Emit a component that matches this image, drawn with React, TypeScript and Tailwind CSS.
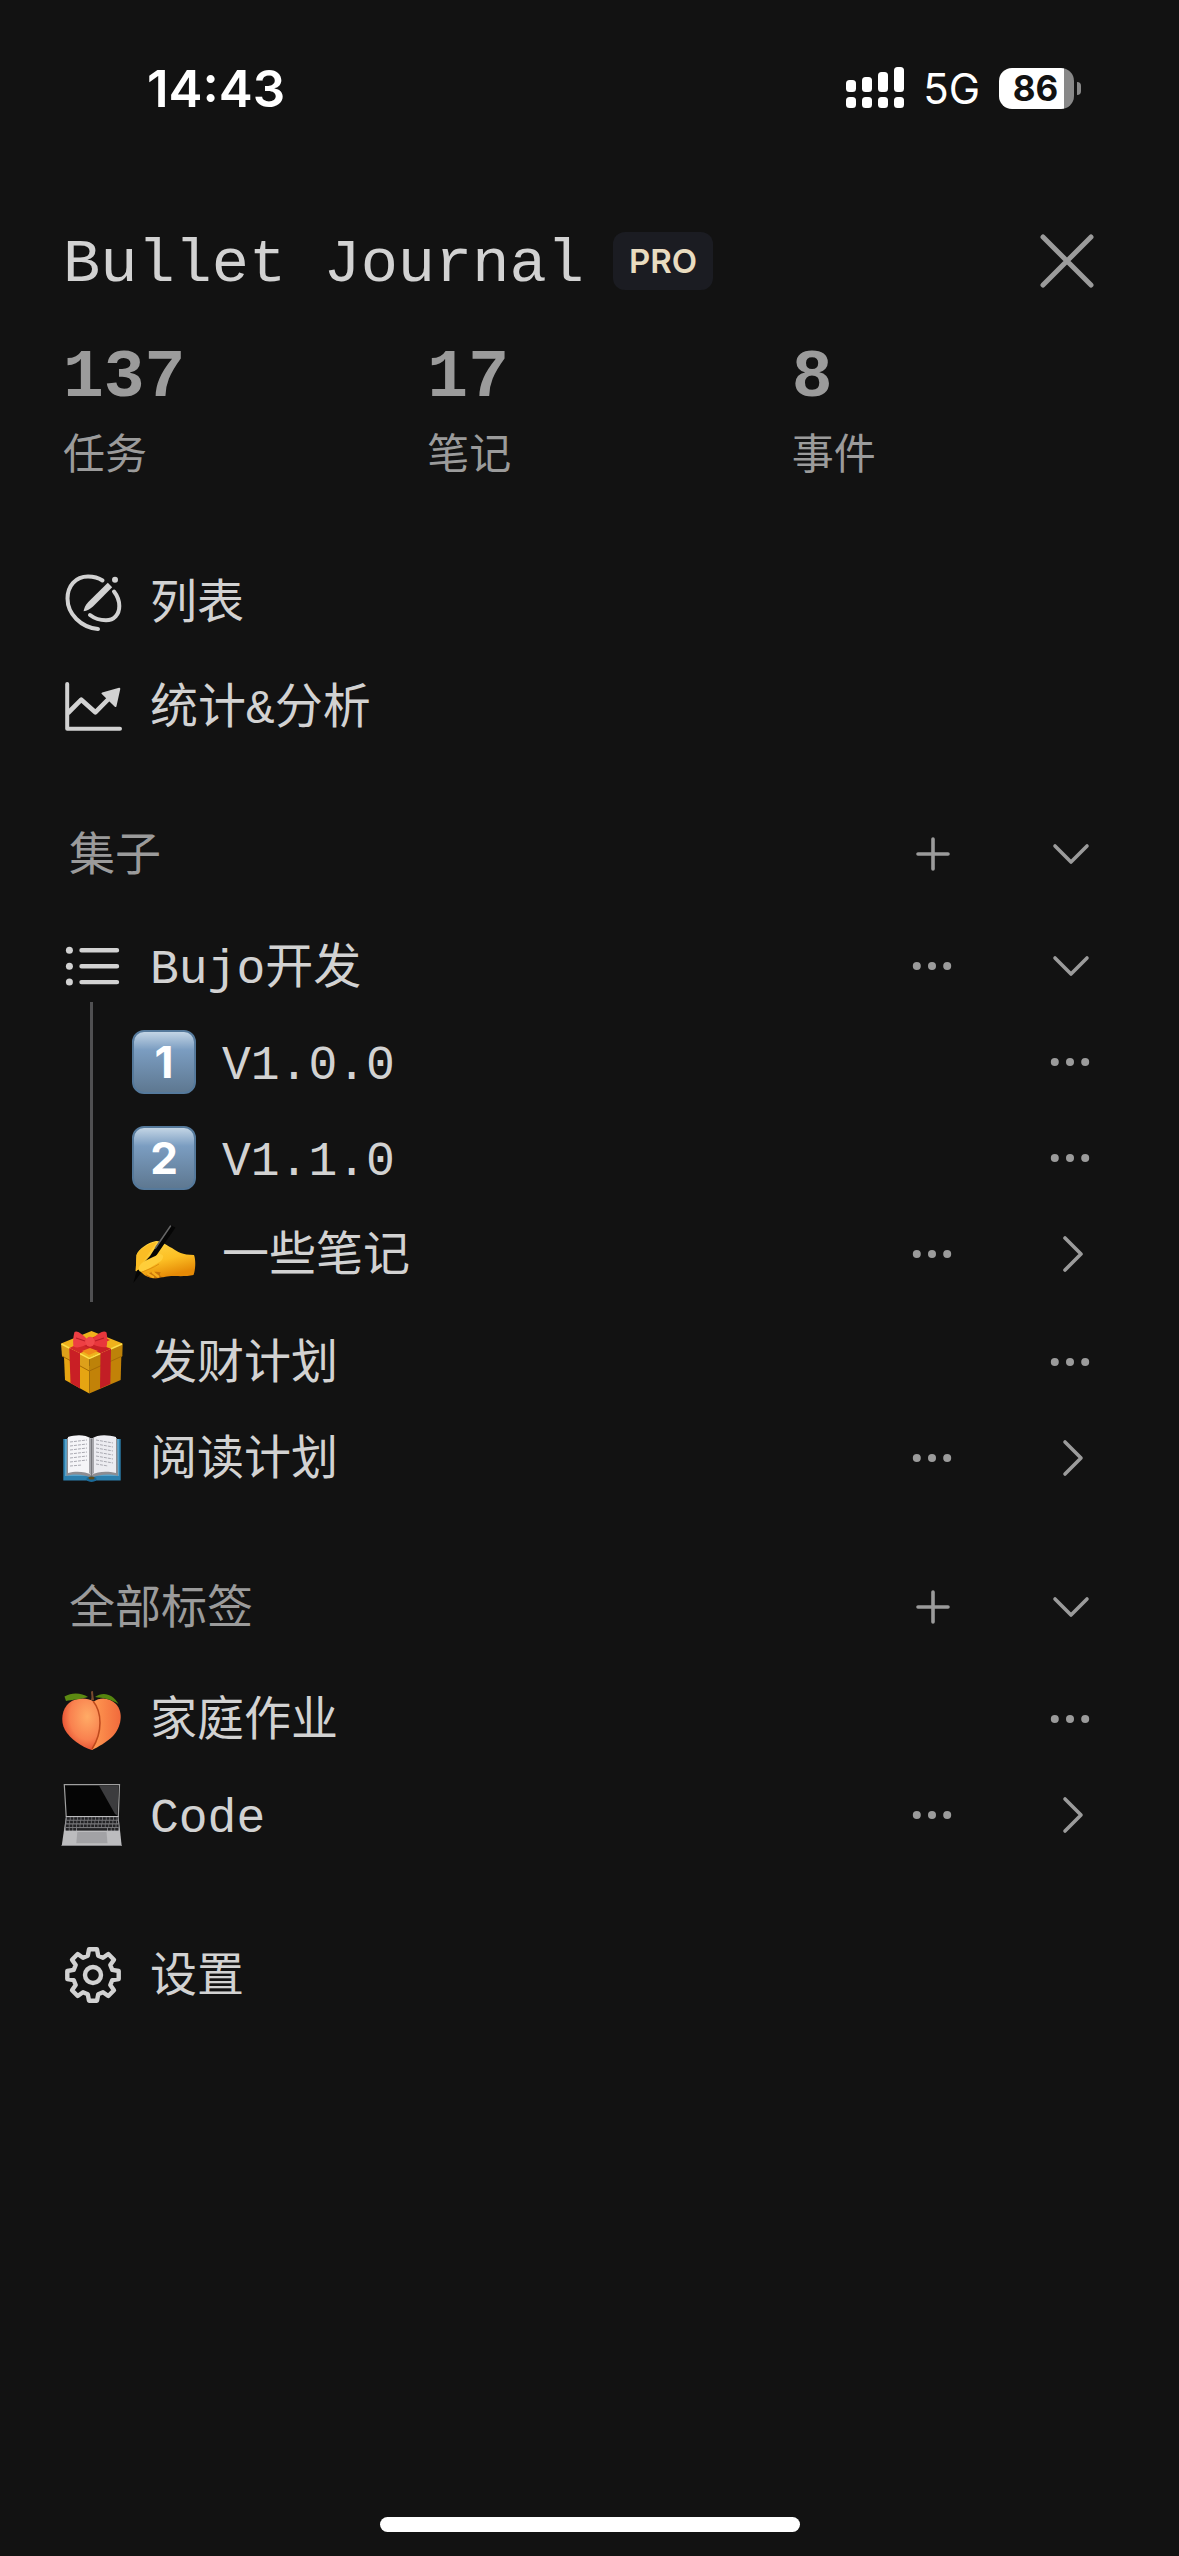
import React from "react";

type Tail = "down" | "right" | "none";

interface Entry {
  name: string;
  icon: React.ReactNode;
  tail: Tail;
}

/* ---------- Line icons ---------- */

const ComposeIcon = () => (
  <svg viewBox="0 0 64 64" className="w-16 h-16" fill="none" stroke="currentColor" strokeWidth="4" strokeLinecap="round">
    <path d="M42.5 10.5C38 7.500 33 6.500 28 6.500C15.500 6.500 7.500 16 7.500 28.500C7.500 44 21 57.500 38 59" />
    <path d="M54 21.500C57.500 26 59.300 31 59.300 36C59.300 44.500 54 50.300 46 50.300C40 50.300 34.500 48.500 30 45" />
    <path d="M47.800 12.800L52.200 17.200L33 36.500C30 39.200 27 40.800 23.600 41.300C24 38 25.600 35 28.300 32Z" fill="currentColor" stroke="none" />
    <circle cx="55" cy="9.800" r="3" fill="currentColor" stroke="none" />
  </svg>
);

const ChartIcon = () => (
  <svg viewBox="0 0 64 64" className="w-16 h-16" fill="none" stroke="currentColor" strokeWidth="4" strokeLinecap="round" strokeLinejoin="round">
    <path d="M7.200 10V54.700H60" />
    <path d="M8.500 38.500L21.300 25.700L35.300 38.300L52 21.500" strokeWidth="4.600" />
    <path d="M59.300 14.800L42.500 19.400L55.500 32Z" fill="currentColor" strokeWidth="2" />
  </svg>
);

const ListIcon = () => (
  <svg viewBox="0 0 64 64" className="w-16 h-16" fill="none" stroke="currentColor" strokeWidth="4.400" strokeLinecap="round">
    <path d="M21.500 16.300H57M21.500 32.200H57M21.500 48.100H57" />
    <g fill="currentColor" stroke="none">
      <circle cx="9.400" cy="16.300" r="3.500" />
      <circle cx="9.400" cy="32.200" r="3.500" />
      <circle cx="9.400" cy="48.100" r="3.500" />
    </g>
  </svg>
);

const GearIcon = () => (
  <svg viewBox="-33 -32 64 64" className="w-16 h-16" fill="none" stroke="currentColor" strokeWidth="4.400" strokeLinejoin="round">
    <path d="M-4 -25.700H4L5.200 -19.300L10 -17.300L15.300 -21L21 -15.300L17.300 -10L19.300 -5.200L25.700 -4V4L19.300 5.200L17.300 10L21 15.300L15.300 21L10 17.300L5.200 19.300L4 25.700H-4L-5.200 19.300L-10 17.300L-15.300 21L-21 15.300L-17.300 10L-19.300 5.200L-25.700 4V-4L-19.300 -5.200L-17.300 -10L-21 -15.300L-15.300 -21L-10 -17.300L-5.200 -19.300Z" />
    <circle r="8" />
  </svg>
);

const PlusIcon = () => (
  <svg viewBox="0 0 40 40" className="w-10 h-10" fill="none" stroke="currentColor" strokeWidth="3.600" strokeLinecap="round">
    <path d="M21 5V35M6 20H36" />
  </svg>
);

const DotsIcon = () => (
  <svg viewBox="0 0 40 40" className="w-10 h-10" fill="currentColor">
    <circle cx="4.800" cy="20" r="4" />
    <circle cx="20" cy="20" r="4" />
    <circle cx="35.200" cy="20" r="4" />
  </svg>
);

const ChevronIcon = ({ direction }: { direction: "down" | "right" }) => (
  <svg viewBox="0 0 40 40" className="w-10 h-10" fill="none" stroke="currentColor" strokeWidth="3.600" strokeLinecap="round" strokeLinejoin="round">
    <path d={direction === "down" ? "M5 12L21 28L37 12" : "M15 4L31 20L15 36"} />
  </svg>
);

/* ---------- Colour icons ---------- */

const Keycap = ({ digit }: { digit: string }) => (
  <span className="flex items-center justify-center w-16 h-16 rounded-xl border-2 border-[#55799b] bg-linear-to-b from-[#c3d5e5] via-[#7b9dc1] via-30% to-[#5e7891] font-['Inter',sans-serif] text-[44px] font-bold leading-none text-white">
    {digit}
  </span>
);

const WritingHand = () => (
  <svg viewBox="0 0 64 64" className="w-16 h-16">
    <defs>
      <linearGradient id="skin" x1="0" y1="0" x2="0.4" y2="1">
        <stop offset="0" stopColor="#ffd84a" />
        <stop offset="0.600" stopColor="#fcbf24" />
        <stop offset="1" stopColor="#e58a06" />
      </linearGradient>
    </defs>
    <path d="M3.700 49L4.500 33C6 27 17 20 24 19C29 18.500 34 23 40 26C46 30 50 33 62 33C64 38 63.500 48 61.500 53C54 55 43 53.500 35 54.500C32 54.500 31 56 28 55C24 57 20 56 17 55C12 54 12 52 10 51Z" fill="url(#skin)" />
    <path d="M14 53C19 50 23 49 29 50.500C27 52 28 54 30 55C26 57 17 57 14 53Z" fill="#c9750a" />
    <path d="M16 52L21 55M21 50.500L26 54.500" stroke="#f6ad1c" strokeWidth="2.500" strokeLinecap="round" />
    <path d="M38 3L43.500 5.500L24 34L9 51L1.300 61L5 48L18 34Z" fill="#050505" />
    <path d="M38.500 4L23.500 26" stroke="#666" strokeWidth="1.500" strokeLinecap="round" />
    <path d="M3.700 49L4.500 33C8 27 17 21 25 20L12 38L8 47Z" fill="#fbbd24" />
    <path d="M8 43C12 38 20 36 27 32C31 32 33 34 29 39C24 42 15 48 10 50C6 50 6 46 8 43Z" fill="#ffce3a" />
    <path d="M10 50C15 48 21 46 27 42" stroke="#df900e" strokeWidth="1" fill="none" />
  </svg>
);

const Gift = () => (
  <svg viewBox="0 0 64 64" className="w-16 h-16">
    <path d="M3.700 20L29.300 36V63.500L5 50Z" fill="#e6a512" />
    <path d="M61.500 20L29.300 36V63.500L60.700 50Z" fill="#c28208" />
    <path d="M1 13.500L31.500 1L62.700 13.500L29.300 28Z" fill="#efb21c" />
    <path d="M1 13.500L29.300 28V41L2 26Z" fill="#dda01a" />
    <path d="M62.700 13.500L29.300 28V41L62.300 26Z" fill="#bd8209" />
    <path d="M2 26L29.300 41L62.300 26" fill="none" stroke="#a66b05" strokeWidth="1" />
    <path d="M1.500 14L29.300 28.500L62 14" fill="none" stroke="#ffe14a" strokeWidth="1.500" />
    <path d="M9.300 18L20 23.300V58.500L10.500 53Z" fill="#c91f25" />
    <path d="M40.500 23.300L51 18.700L50.300 54L40 58.500Z" fill="#c21e25" />
    <path d="M9.300 18L38 5L50 10L20 23.300Z" fill="#d32929" />
    <path d="M22 8L51 18.700L40.500 23.300L13 11Z" fill="#c82025" />
    <path d="M30 18L38 21L29 25L22 21Z" fill="#f28b19" />
    <path d="M27 9C22 4 17 0 14.500 2C13 7 13 13 13.500 16.500C18 19 23 16 28 14Z" fill="#ee3f43" />
    <path d="M33 9C38 3 44 0 46.500 2.500C47.500 7 47.500 13 46.500 17C42 18 37 16 32 14Z" fill="#e8373c" />
    <path d="M16 8L25 11M44 8L35 11" stroke="#b91d27" strokeWidth="1.200" />
    <ellipse cx="30" cy="11.700" rx="4.500" ry="5" fill="#f0484a" />
  </svg>
);

const OpenBook = () => (
  <svg viewBox="0 0 64 64" className="w-16 h-16">
    <path d="M3.300 13H60.700V54.500H36C34 56 29 56 27 54.500H3.300Z" fill="#2c7fad" />
    <path d="M5 13H59V50H5Z" fill="#57a3cb" />
    <path d="M7 12L6.500 50C16 47 25 49 31.500 52C38 49 48 47 58 50L57 12Z" fill="#8d8d92" />
    <path d="M8 11C15 9 25 8 31.500 13V49C25 45 15 45 8 47Z" fill="#f5f5f8" />
    <path d="M31.500 13C38 8 48 9 56 11V47C48 45 38 45 31.500 49Z" fill="#ececf1" />
    <path d="M29 11.500C31 12 31 13 31.500 14C32 13 32 12 34 11.500V47L31.500 49.500L29 47Z" fill="#a5a5aa" />
    <path d="M31.500 13V50" stroke="#77777c" strokeWidth="1" />
    <g stroke="#aaaab2" strokeWidth="1" strokeDasharray="3 1">
      <path d="M10 16L27 14M10 20L27 18M10 24L27 22M10 28L27 26M10 32L27 30M10 36L27 34M10 40L22 39" />
      <path d="M36 14L53 17M36 18L53 21M36 22L53 25M36 26L53 29M36 30L53 33M36 34L53 37M36 38L48 40" />
    </g>
    <ellipse cx="31.500" cy="53" rx="5" ry="2.500" fill="#196a9a" />
    <ellipse cx="31.500" cy="52" rx="3" ry="1.500" fill="#5f4c1c" />
  </svg>
);

const Peach = () => (
  <svg viewBox="0 0 64 64" className="w-16 h-16">
    <defs>
      <radialGradient id="peach-left" cx="0.650" cy="0.350" r="0.750">
        <stop offset="0" stopColor="#ffab66" />
        <stop offset="0.600" stopColor="#f9814f" />
        <stop offset="1" stopColor="#df4029" />
      </radialGradient>
      <linearGradient id="peach-right" x1="0" y1="0" x2="1" y2="0">
        <stop offset="0" stopColor="#ff9a52" />
        <stop offset="1" stopColor="#f16a3c" />
      </linearGradient>
    </defs>
    <path d="M33 15C41 9 50 11 56 17C64 26 61 40 53 49C47 55 38 60 32 63Z" fill="url(#peach-right)" />
    <path d="M32 63C22 60 10 52 5 43C0 34 2 22 9 16C17 10 27 11 33 14C43 25 44 45 32 63Z" fill="url(#peach-left)" />
    <path d="M33 14C42 25 43 45 32 62" fill="none" stroke="#bd4a1c" strokeWidth="1.500" />
    <path d="M4.500 9.500C12 5 22 6 28 10C21 12 12 13 6 14Z" fill="#5c8a12" />
    <path d="M35 10C43 4 53 7 58.500 17C51 12 43 11 35 10Z" fill="#55850f" />
    <path d="M31 13C32 10 31 7 31 4.500L33 4C33 7 33.500 10 34 13Z" fill="#7a4a2d" />
  </svg>
);

const Laptop = () => (
  <svg viewBox="0 0 64 64" className="w-16 h-16">
    <path d="M4.300 1.700H59.500L58.300 33.500H6.200Z" fill="#050505" stroke="#a0a0a0" strokeWidth="1.200" />
    <path d="M39 2.500H58.500L57.500 32.500L55 31Z" fill="#3c3c3e" />
    <path d="M6 33H58.500L61.700 63H1.700Z" fill="#bcbcbe" />
    <path d="M6 34H58.300L59.300 47.500H4.700Z" fill="#77777a" />
    <g stroke="#222224" strokeWidth="2.400" strokeDasharray="2.800 0.800">
      <path d="M7 35.500H58M6.500 39H58M6 42.700H58.500M6 46.300H16M48 46.300H59" />
    </g>
    <path d="M17 46.300H47" stroke="#222224" strokeWidth="2.400" />
    <path d="M17.300 49H46.500L47.500 60.300H16.300Z" fill="#a2a2a5" />
    <path d="M23 63C24 61.500 39 61.500 40.500 63Z" fill="#555558" />
    <path d="M1.700 62.500H61.700" stroke="#88888b" strokeWidth="1" />
  </svg>
);

/* ---------- Data ---------- */

const stats = [
  { value: 137, label: "任务" },
  { value: 17, label: "笔记" },
  { value: 8, label: "事件" },
];

const bujoChildren: Entry[] = [
  { name: "V1.0.0", icon: <Keycap digit="1" />, tail: "none" },
  { name: "V1.1.0", icon: <Keycap digit="2" />, tail: "none" },
  { name: "一些笔记", icon: <WritingHand />, tail: "right" },
];

const collections: Entry[] = [
  { name: "发财计划", icon: <Gift />, tail: "none" },
  { name: "阅读计划", icon: <OpenBook />, tail: "right" },
];

const tags: Entry[] = [
  { name: "家庭作业", icon: <Peach />, tail: "none" },
  { name: "Code", icon: <Laptop />, tail: "right" },
];

/* ---------- Building blocks ---------- */

const IconButton = ({ label, children }: { label: string; children: React.ReactNode }) => (
  <button type="button" aria-label={label} className="flex h-full w-[138px] items-center justify-center text-[#9b9b9b]">
    {children}
  </button>
);

// Names with Latin letters are set one step larger than pure Chinese ones
const nameSize = (name: string) => (/[A-Za-z&]/.test(name) ? "text-[48px]" : "text-[47px]");

const NavLink = ({ icon, name }: { icon: React.ReactNode; name: string }) => (
  <a href="#" className="flex flex-1 items-center gap-[26px]">
    {icon}
    <span className={`pt-2 leading-[64px] ${nameSize(name)}`}>{name}</span>
  </a>
);

const EntryRow = ({ name, icon, tail }: Entry) => (
  <li className="flex h-24 items-center">
    <NavLink icon={icon} name={name} />
    <IconButton label={`${name} 更多`}>
      <DotsIcon />
    </IconButton>
    {tail !== "none" && (
      <IconButton label={`${name} 展开`}>
        <ChevronIcon direction={tail} />
      </IconButton>
    )}
  </li>
);

const SectionHeader = ({ title }: { title: string }) => (
  <div className="flex h-24 items-center pl-[9px] text-[#9b9b9b]">
    <h2 className="flex-1 pt-2 text-[46px] leading-[64px]">{title}</h2>
    <IconButton label={`新建${title}`}>
      <PlusIcon />
    </IconButton>
    <IconButton label={`收起${title}`}>
      <ChevronIcon direction="down" />
    </IconButton>
  </div>
);

const StatusBar = () => (
  <div className="flex h-[176px] items-center justify-between pl-[147px] pr-[98px] font-['Inter',sans-serif] text-white">
    <span className="text-[51px] font-semibold leading-none">14:43</span>
    <div className="flex items-center">
      <svg viewBox="0 0 58 42" className="h-[42px] w-[58px]" fill="currentColor">
        <rect x="0" y="13" width="10" height="12" rx="3.500" />
        <rect x="16" y="10" width="10" height="15" rx="3.500" />
        <rect x="32" y="5" width="10" height="20" rx="3.500" />
        <rect x="48" y="0" width="10" height="25" rx="3.500" />
        <rect x="0" y="30" width="10" height="11" rx="3.500" />
        <rect x="16" y="30" width="10" height="11" rx="3.500" />
        <rect x="32" y="30" width="10" height="11" rx="3.500" />
        <rect x="48" y="30" width="10" height="11" rx="3.500" />
      </svg>
      <span className="ml-[19px] pt-[2px] text-[42px] leading-none">5G</span>
      <div className="ml-[19px] flex items-center gap-[3px]">
        <div className="flex h-[41px] w-[75px] items-center justify-center rounded-[13px] bg-linear-to-r from-white from-87% to-[#888] to-87% pr-[2px] text-[35px] font-bold leading-none text-[#121212]">
          86
        </div>
        <span className="h-[13px] w-1 rounded-r-full bg-[#888]" />
      </div>
    </div>
  </div>
);

const App: React.FC = () => {
  return (
    <div className="flex min-h-screen flex-col bg-[#121212] font-['Liberation_Mono','Noto_Sans_CJK_SC',monospace] text-[#d2d2d2]">
      <StatusBar />

      {/* Title */}
      <header className="flex h-[170px] items-center pl-[63px] pr-[43px]">
        <h1 className="pt-2 text-[62px] leading-[72px]">Bullet Journal</h1>
        <span className="ml-[29px] flex h-[58px] items-center rounded-xl bg-[#1b1c22] px-4 font-['Inter',sans-serif] text-[33px] font-semibold leading-none text-[#e9dcc0]">
          PRO
        </span>
        <button type="button" aria-label="关闭" className="ml-auto flex h-20 w-[138px] items-center justify-center text-[#9b9b9b]">
          <svg viewBox="0 0 56 56" className="h-14 w-14" fill="none" stroke="currentColor" strokeWidth="5" strokeLinecap="round">
            <path d="M4 4L52 52M52 4L4 52" />
          </svg>
        </button>
      </header>

      {/* Stats */}
      <dl className="grid grid-cols-3 gap-10 px-[63px] text-[#9b9b9b]">
        {stats.map((stat) => (
          <div key={stat.label} className="flex flex-col-reverse gap-4">
            <dt className="text-[42px] leading-[64px]">{stat.label}</dt>
            <dd className="text-[68px] font-bold leading-[64px]">{stat.value}</dd>
          </div>
        ))}
      </dl>

      <nav className="mt-15 pl-[60px] pr-10">
        <ul>
          <li className="flex h-[104px] items-center">
            <NavLink icon={<ComposeIcon />} name="列表" />
          </li>
          <li className="flex h-[104px] items-center">
            <NavLink icon={<ChartIcon />} name="统计&分析" />
          </li>
        </ul>

        {/* Collections */}
        <section className="mt-12">
          <SectionHeader title="集子" />
          <ul className="mt-4">
            <EntryRow name="Bujo开发" icon={<ListIcon />} tail="down" />
          </ul>
          <ul className="-mt-3 ml-[30px] border-l-3 border-[#505052] pl-[39px] pt-3">
            {bujoChildren.map((entry) => (
              <EntryRow key={entry.name} {...entry} />
            ))}
          </ul>
          <ul className="mt-3">
            {collections.map((entry) => (
              <EntryRow key={entry.name} {...entry} />
            ))}
          </ul>
        </section>

        {/* Tags */}
        <section className="mt-[53px]">
          <SectionHeader title="全部标签" />
          <ul className="mt-4">
            {tags.map((entry) => (
              <EntryRow key={entry.name} {...entry} />
            ))}
          </ul>
        </section>

        <div className="mt-16 flex h-24 items-center">
          <NavLink icon={<GearIcon />} name="设置" />
        </div>
      </nav>

      {/* Home indicator */}
      <div className="mx-auto mb-6 mt-auto h-[15px] w-[420px] rounded-full bg-white" />
    </div>
  );
};

export default App;
